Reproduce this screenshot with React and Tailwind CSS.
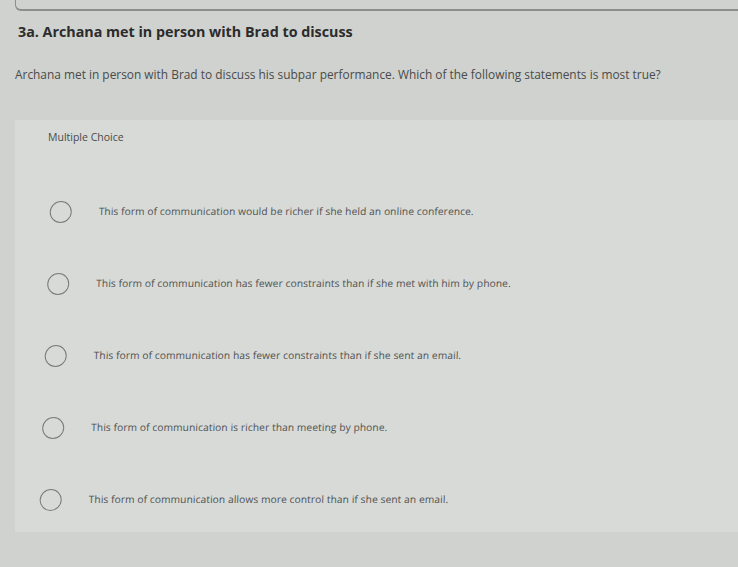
const options = [
  'This form of communication would be richer if she held an online conference.',
  'This form of communication has fewer constraints than if she met with him by phone.',
  'This form of communication has fewer constraints than if she sent an email.',
  'This form of communication is richer than meeting by phone.',
  'This form of communication allows more control than if she sent an email.',
];

const App = () => {
  return (
    <div className="w-full h-[567px] overflow-hidden bg-[#cfd2cf] font-['Open_Sans',sans-serif]">
      {/* bottom edge of the previous box */}
      <div className="ml-[15px] h-[11px] border-b-2 border-l border-[#8c8e8c] rounded-bl-md" />

      <h1 className="mt-[12px] ml-[18px] text-[14.3px] font-bold text-[#2c2c2c] leading-[18px]">
        3a. Archana met in person with Brad to discuss
      </h1>

      <p className="mt-[26px] ml-[15px] text-[11.9px] text-[#4a4b4a] leading-[15px]">
        Archana met in person with Brad to discuss his subpar performance. Which of the following statements is most true?
      </p>

      <div className="mt-[38px] ml-[15px] h-[412px] bg-[#d7dad7]">
        <div className="pt-[10px] pl-[33px] text-[10.5px] text-[#4a4b4a] leading-[14px]">Multiple Choice</div>

        <div className="mt-[32px] -skew-x-2 origin-top-left">
          {options.map((text) => (
            <div key={text} className="h-[72px] flex items-center pl-[36px]">
              <span className="w-[22px] h-[22px] rounded-full border-[1.5px] border-[#7a7c7a] shrink-0" />
              <span className="ml-[27px] text-[10.2px] tracking-[0.1px] text-[#505150]">{text}</span>
            </div>
          ))}
        </div>
      </div>
    </div>
  );
};

export default App;
